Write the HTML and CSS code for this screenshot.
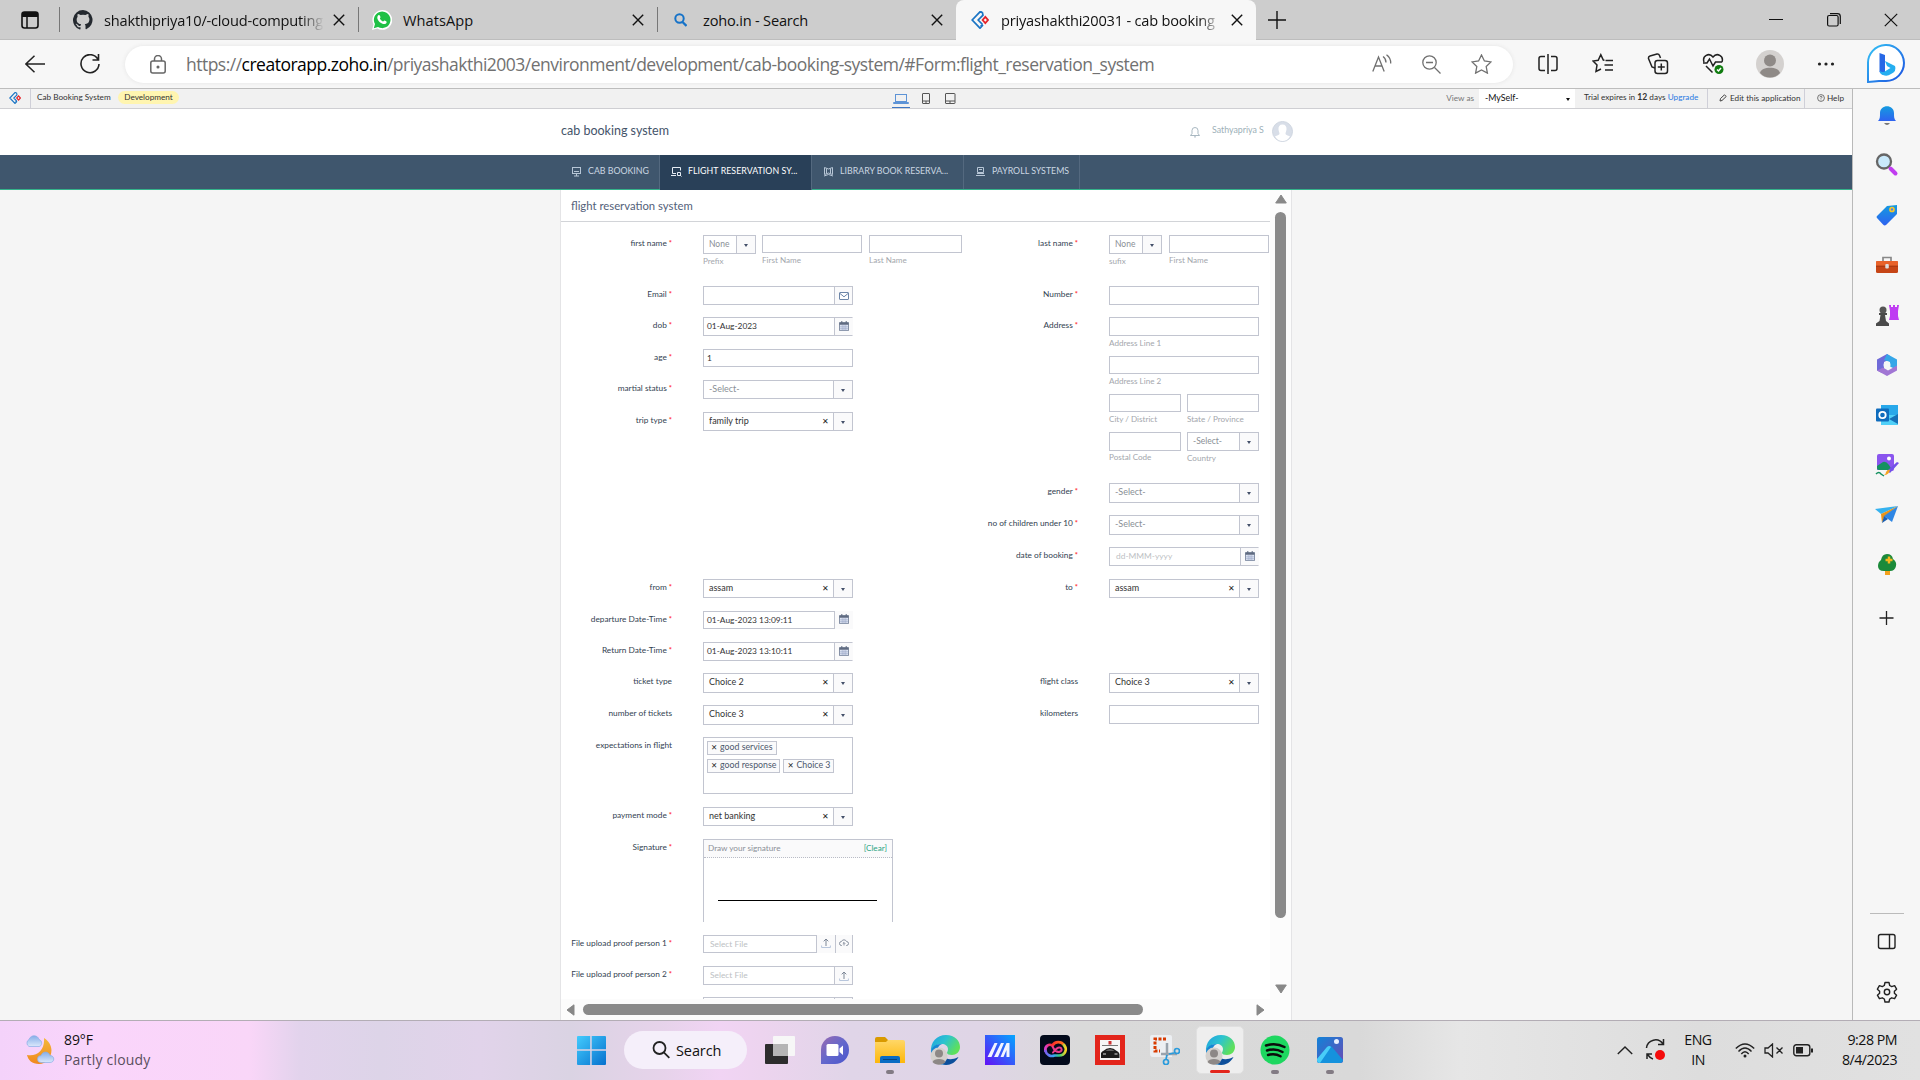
FILE: index.html
```html
<!DOCTYPE html>
<html lang="en">
<head>
<meta charset="utf-8">
<title>priyashakthi20031 - cab booking system</title>
<link rel="stylesheet" href="styles.css">
</head>
<body>
<svg class="defs" width="0" height="0">
  <defs>
    <linearGradient id="gBlue" x1="0" y1="0" x2="0" y2="1"><stop offset="0" stop-color="#149be0"/><stop offset="1" stop-color="#2f62f0"/></linearGradient>
    <linearGradient id="gBing" x1="0" y1="0" x2="1" y2="1"><stop offset="0" stop-color="#35c3f5"/><stop offset="1" stop-color="#1b4fe0"/></linearGradient>
    <linearGradient id="gEdge" x1="0" y1="0" x2="1" y2=".5"><stop offset="0" stop-color="#1f9fe0"/><stop offset=".5" stop-color="#2cc3d0"/><stop offset="1" stop-color="#5fe05a"/></linearGradient>
    <linearGradient id="gWin" x1="0" y1="0" x2="1" y2="1"><stop offset="0" stop-color="#43cbfd"/><stop offset="1" stop-color="#0671ce"/></linearGradient>
    <linearGradient id="gMy" x1="1" y1="0" x2="0" y2="1"><stop offset="0" stop-color="#03a6ff"/><stop offset="1" stop-color="#6410f5"/></linearGradient>
    <linearGradient id="gChat" x1="0" y1="0" x2="1" y2="1"><stop offset="0" stop-color="#9a6ab0"/><stop offset=".5" stop-color="#6468cc"/><stop offset="1" stop-color="#4a55cc"/></linearGradient>
    <linearGradient id="gMoon" x1="0" y1="0" x2="0" y2="1"><stop offset="0" stop-color="#f3b93a"/><stop offset="1" stop-color="#f0881e"/></linearGradient>
    <linearGradient id="gCloud" x1="0" y1="0" x2="0" y2="1"><stop offset="0" stop-color="#86aee8"/><stop offset="1" stop-color="#dbe8fb"/></linearGradient>
    <linearGradient id="gPhoto" x1="0" y1="0" x2="1" y2="1"><stop offset="0" stop-color="#1183d8"/><stop offset="1" stop-color="#6a4bb5"/></linearGradient>
    <linearGradient id="gFolder" x1="0" y1="0" x2="0" y2="1"><stop offset="0" stop-color="#ffd767"/><stop offset="1" stop-color="#fdb70a"/></linearGradient>
    <linearGradient id="gWarm" x1="0" y1="0" x2="1" y2="0"><stop offset="0" stop-color="#d93fd0"/><stop offset=".35" stop-color="#ff2a2a"/><stop offset="1" stop-color="#ff7a1a"/></linearGradient>
    <linearGradient id="gCool" x1="0" y1="0" x2="1" y2="0"><stop offset="0" stop-color="#7a5cf0"/><stop offset=".4" stop-color="#35a8f5"/><stop offset=".7" stop-color="#3ad07a"/><stop offset="1" stop-color="#f8d022"/></linearGradient>
    <symbol id="x" viewBox="0 0 12 12"><path d="M.8.8 11.2 11.2M11.2.8.8 11.2" stroke="#111" stroke-width="1.4" fill="none"/></symbol>
    <symbol id="zoho" viewBox="0 0 18 18"><path d="M11.3 1.2 9 .8 1.2 9 9 17.2 12 14M11.3 1.2 12 4.2 7.2 9 11.5 13.5 M12 14 9.5 15" stroke="#1a74c4" stroke-width="1.7" fill="none"/><path d="M14.3 5.8 17 9l-2.7 3.2L11.6 9z" stroke="#e5242b" stroke-width="1.8" fill="none"/></symbol>
    <symbol id="cal" viewBox="0 0 10 10"><path d="M.5 1.6h9v8h-9z" fill="#dfe5f4" stroke="#6c7890" stroke-width=".8"/><path d="M.5 1.6h9v2.2h-9zM2.3 0h1v2h-1zM6.7 0h1v2h-1z" fill="#5f6a80"/><path d="M3.2 4v5.5M5 4v5.5M6.8 4v5.5M.8 5.8h8.4M.8 7.7h8.4" stroke="#8d9abc" stroke-width=".5"/></symbol>
    <symbol id="up" viewBox="0 0 10 10"><path d="M5 8V1.2M2.7 3.3 5 1l2.3 2.3" fill="none" stroke="#7d8796" stroke-width="1"/><path d="M.6 7.5v2h8.8v-2" fill="none" stroke="#b8c6dc" stroke-width="1"/></symbol>
    <symbol id="edge" viewBox="0 0 30 30"><path d="M1 17C0 7 7 0 16 0c9 0 14 6 14 12 0 5-4 8-8 8-3 0-5-1-5-2 0-1 1-2 1-4 0-3-3-5-6-5C6 9 2 12 1 17z" fill="url(#gEdge)"/><path d="M1 17C1 12 6 8.500 12 9c-3 1-5 4-5 8 0 7 6 12 13 12C9 32 1 26 1 17z" fill="#1687d3"/><path d="M12 14c-2 8 5 11 10 10 3 0 5-1.500 6.500-2C26 27 21 30 16 30c-6-1-9-7-8-12 1-2 2-3 4-4z" fill="#0c4f9b"/><circle cx="9" cy="21" r="8.500" fill="#d3d0cd"/><circle cx="9" cy="18.500" r="4" fill="#8d8886"/><path d="M2.500 27c1-4 12-4 13 0-3 3.500-10 3.500-13 0z" fill="#8d8886"/></symbol>
    <symbol id="person" viewBox="0 0 28 28"><circle cx="14" cy="14" r="14" fill="#d4d1cf"/><circle cx="14" cy="10.500" r="6" fill="#8f8a87"/><path d="M4 23c1-7 19-7 20 0-5 6-15 6-20 0z" fill="#8f8a87"/></symbol>
  </defs>
</svg>

<header class="tabs">
  <svg class="tab-actions" width="18" height="18" viewBox="0 0 18 18"><rect x="1" y="1" width="16" height="16" rx="2.500" fill="none" stroke="#111" stroke-width="1.600"/><path d="M1 3q0-2 2-2h12q2 0 2 2v3H1z" fill="#111"/><path d="M6 5v12" stroke="#111" stroke-width="1.500"/></svg>
  <div class="tab">
    <svg width="20" height="20" viewBox="0 0 16 16"><path fill="#24292f" d="M8 0a8 8 0 0 0-2.530 15.590c.4.070.550-.170.550-.380v-1.500c-2.200.500-2.700-1-2.700-1-.400-.900-.900-1.200-.900-1.200-.700-.500.100-.500.100-.500.800.100 1.200.800 1.200.800.700 1.300 1.900.900 2.300.700.100-.500.300-.900.500-1.100-1.800-.200-3.600-.900-3.600-4 0-.900.300-1.600.800-2.100-.100-.200-.400-1 .100-2.100 0 0 .700-.200 2.200.800a7.500 7.500 0 0 1 4 0c1.500-1 2.200-.800 2.200-.800.400 1.100.200 1.900.100 2.100.500.600.800 1.300.800 2.100 0 3.100-1.900 3.700-3.700 3.900.300.300.600.800.600 1.500v2.200c0 .200.100.500.600.400A8 8 0 0 0 8 0z"/></svg>
    <span class="tab-title fade">shakthipriya10/-cloud-computing</span><svg class="tab-x" width="12" height="12"><use href="#x"/></svg>
  </div>
  <div class="tab">
    <svg width="20" height="20" viewBox="0 0 20 20"><path d="M0 20 1.500 14.500A9.900 9.900 0 1 1 5.300 18.500z" fill="#fff"/><path d="M1.800 18.200 3 14A8.300 8.300 0 1 1 6 17z" fill="#1fc045"/><path d="M6.300 5.300c1-.9 1.500-.2 2.200 1.700.2.600-.8 1.100-.6 1.600.7 1.300 1.700 2.300 3.100 2.900.6.200 1-1.100 1.500-.9 2 .9 2.400 1.100 2.100 1.900-.5 1.500-2.100 1.900-3.600 1.400-2.900-.8-4.700-2.700-5.500-4.900-.4-1.300-.2-2.800.8-3.700z" fill="#fff"/></svg>
    <span class="tab-title wa">WhatsApp</span><svg class="tab-x" width="12" height="12"><use href="#x"/></svg>
  </div>
  <div class="tab tab-search">
    <svg width="13" height="14" viewBox="0 0 13 14"><circle cx="5.500" cy="5.500" r="4.200" fill="none" stroke="#1572c8" stroke-width="2"/><path d="m8.500 9 4 4" stroke="#1572c8" stroke-width="2.300"/></svg>
    <span class="tab-title">zoho.in - Search</span><svg class="tab-x" width="12" height="12"><use href="#x"/></svg>
  </div>
  <div class="tab active">
    <svg width="18" height="18"><use href="#zoho"/></svg>
    <span class="tab-title fade">priyashakthi20031 - cab booking</span><svg class="tab-x" width="12" height="12"><use href="#x"/></svg>
  </div>
  <svg class="newtab" width="18" height="18"><path d="M9 0v18M0 9h18" stroke="#111" stroke-width="1.400"/></svg>
  <div class="win">
    <svg width="14" height="14"><path d="M0 6.500h14" stroke="#111"/></svg>
    <svg width="14" height="14" fill="none" stroke="#111" stroke-width="1.200"><rect x=".6" y="2.500" width="10.500" height="10.500" rx="1.500"/><path d="M3 .7h7.500q2.800 0 2.800 2.800V11"/></svg>
    <svg width="14" height="14"><path d="m.8.800 12.400 12.400M13.200.8.8 13.200" stroke="#111" stroke-width="1.200"/></svg>
  </div>
</header>

<nav class="toolbar">
  <svg class="back" width="20" height="18" fill="none" stroke="#222" stroke-width="1.500"><path d="M20 9H1M9.500.8.9 9l8.600 8.200"/></svg>
  <svg class="reload" width="20" height="20" fill="none" stroke="#222" stroke-width="1.600"><path d="M18 5.500A9 9 0 1 0 19 10M18.500 0v6h-6"/></svg>
  <div class="url">
    <svg width="16" height="19" fill="none" stroke="#666" stroke-width="1.500"><rect x=".8" y="6" width="14.400" height="12" rx="2"/><path d="M4.500 6V4a3.500 3.500 0 0 1 7 0v2"/><circle cx="8" cy="12" r=".8" fill="#666"/></svg>
    <span class="addr">https://<b>creatorapp.zoho.in</b>/priyashakthi2003/environment/development/cab-booking-system/#Form:flight_reservation_system</span>
    <svg width="20" height="20" fill="none" stroke="#707070" stroke-width="1.300"><path d="M.8 17.500 6.500 3l5.700 14.500M2.800 12h7.500M11 2.500q3 2 3 6M14.500.8Q19 4 18.700 9.500"/></svg>
    <svg class="zo" width="19" height="19" fill="none" stroke="#707070" stroke-width="1.300"><circle cx="7.500" cy="7.500" r="6.700"/><path d="m12.500 12.500 6 6M4 7.500h7"/></svg>
    <svg class="st" width="21" height="20" viewBox="0 0 21 20" fill="none" stroke="#707070" stroke-width="1.300"><path d="m10.500 1 2.900 6 6.600.9-4.800 4.600 1.200 6.600-5.900-3.100-5.900 3.100 1.200-6.600L1 7.900 7.600 7z"/></svg>
  </div>
  <div class="tools">
    <svg width="22" height="22" viewBox="0 0 22 22"><path d="M11 1v20M8 3.500H4q-2 0-2 2v10q0 2 2 2h4M14 3.500h4q2 0 2 2v10q0 2-2 2h-4"/></svg>
    <svg width="22" height="22" viewBox="0 0 22 22"><path d="m12.500 7.200-1.200-.2-2.500-5.300L6.200 7.200 1 8l4 4-1 6.500 5-2.500M13.500 7.500H21M12.500 12H21M13 17h8"/></svg>
    <svg width="22" height="22" viewBox="0 0 22 22"><path d="M8 15 5 14 1.500 5.500q-.3-2 1.500-2.500l7-2q1.800-.3 2.500 1.500L13.500 5"/><rect x="8" y="7.500" width="12.500" height="13" rx="2.500"/><path d="M14.300 10.500v7M10.800 14h7"/></svg>
    <svg width="22" height="22" viewBox="0 0 22 22"><path d="M2 9C0 3 7-1 11 4c4-5 11-1 9 5M1 10h4l2.500-4 3.500 7 2.500-4H20M4 13l6.500 6.500"/><circle cx="17" cy="16.500" r="4.500" fill="#107c10" stroke="none"/><path d="m15 16.500 1.500 1.500 2.500-3" stroke="#fff"/></svg>
    <svg class="me" width="28" height="28"><use href="#person"/></svg>
    <svg width="22" height="22" viewBox="0 0 22 22"><g fill="#222" stroke="none"><circle cx="4.500" cy="11" r="1.600"/><circle cx="11" cy="11" r="1.600"/><circle cx="17.500" cy="11" r="1.600"/></g></svg>
  </div>
  <svg class="bing" width="40" height="40" viewBox="0 0 40 40"><path d="M2 38V20A18 18 0 1 1 20 37H13Q8 37.500 2 38z" fill="#fff" stroke="url(#gBing)" stroke-width="2"/><path d="m13.500 9 5.500 2v17l-2 3-3.500-3z" fill="#2768e6"/><path d="m19 17 10 5q2 5-4 8-4 3-8 1-3-1-3.500-4 4 2 6 0l5-3-3.500-2z" fill="#25aef0"/></svg>
</nav>

<div class="below">
<main class="page">
  <div class="devbar">
    <svg class="zl" width="12" height="12"><use href="#zoho"/></svg>
    <span class="appname">Cab Booking System</span><span class="pill">Development</span>
    <div class="devices">
      <span class="dev on"><svg width="16" height="12" fill="none" stroke="#5d93d6"><rect x="2.500" y="1.500" width="11" height="7"/><path d="M.5 9.500v1h15v-1z"/></svg></span>
      <svg width="8" height="11" fill="none" stroke="#555"><rect x=".5" y=".5" width="7" height="10" rx=".5"/><path d="M.5 8h7M4 8v2.500"/></svg>
      <svg class="tabl" width="11" height="11" fill="none" stroke="#555"><rect x=".5" y=".5" width="9.500" height="10" rx=".5"/><path d="M.5 8h9.500M5 8v2.500"/></svg>
    </div>
    <span class="viewas">View as</span>
    <span class="sel">-MySelf- <i class="tri"></i></span>
    <span class="trial">Trial expires in <b>12</b> days <a>Upgrade</a></span>
    <span class="edit"><svg width="8" height="8" fill="none" stroke="#444"><path d="m1 7 .5-2.500L5.500.8l1.700 1.700L3 6.500z"/></svg>Edit this application</span>
    <span class="help"><svg width="8" height="8" fill="none" stroke="#555" stroke-width=".8"><circle cx="4" cy="4" r="3.400"/><path d="M3 3.300Q3 2.300 4 2.300T5 3.300L4 4.300v.5M4 5.600v.6"/></svg>Help</span>
  </div>
  <div class="apphead">
    <span class="apptitle">cab booking system</span>
    <svg class="bell" width="10" height="12" fill="none" stroke="#9fb0ba" stroke-width=".9"><path d="M.5 9.500h9L8 7.500V4.500a3 3 0 0 0-6 0v3zM4 10.500q1 1.500 2 0"/></svg>
    <span class="user">Sathyapriya S</span>
    <svg width="21" height="21" viewBox="0 0 21 21"><circle cx="10.500" cy="10.500" r="10" fill="#d8dee8" stroke="#cfd6e0"/><path d="M10.500 3.500c3 0 4.300 2 4 5-.2 2-1 3-1 4 0 2 4 2 4.500 3q-3 4.500-7.500 4.500T3 15.500c.5-1 4.500-1 4.500-3 0-1-.8-2-1-4-.3-3 1-5 4-5z" fill="#fff"/></svg>
  </div>
  <div class="nav">
    <span class="n n1"><svg width="11" height="11" fill="none" stroke="#b7c6d6"><rect x="1.500" y="1.500" width="8" height="6"/><path d="M3 5.500h5M5.500 8v2M3 10h5"/></svg>CAB BOOKING</span>
    <span class="n n2"><svg width="11" height="11" fill="none" stroke="#e6edf4"><path d="M9.500 4.500v-3h-8v6H5M0 9.500h5M6.500 6.500h3V9.500h-3zM9 9l1.500 1.500"/></svg>FLIGHT RESERVATION SY...</span>
    <span class="n n3"><svg width="11" height="11" fill="none" stroke="#b7c6d6"><path d="M1.500 1.500 5.500 3 9.500 1.500v7L5.500 7 1.500 8.500zM3.500 2.500v5M7.500 2.500v5M1 10l4.500-1.500L10 10"/></svg>LIBRARY BOOK RESERVA...</span>
    <span class="n n4"><svg width="11" height="11" fill="none" stroke="#b7c6d6"><path d="M2.500 1.500h6v5h-6zM1 9.500h9M2 7.500h7M4 3.500h3"/></svg>PAYROLL SYSTEMS</span>
  </div>
  <div class="stage">
    <section class="panel">
      <div class="vrow">
        <div class="view">
          <h1>flight reservation system</h1>
          <div class="form sec1">
            <div class="col">
              <div class="row r51"><label>first name<i>*</i></label>
                <div class="sub"><div class="f w53"><em>None</em><s></s></div><small>Prefix</small></div>
                <div class="sub g6"><div class="f w100 h18"></div><small>First Name</small></div>
                <div class="sub g7"><div class="f w93 h18"></div><small>Last Name</small></div></div>
              <div class="row r31"><label>Email<i>*</i></label><div class="f"><span></span><u><svg width="10" height="8" fill="#fff" stroke="#6d86a8"><rect x=".5" y=".5" width="9" height="7" rx=".5"/><path d="m1 1.500 4 3.300 4-3.300"/></svg></u></div></div>
              <div class="row r32"><label>dob<i>*</i></label><div class="f open"><span class="d">01-Aug-2023</span><u><svg width="10" height="10"><use href="#cal"/></svg></u></div></div>
              <div class="row r31"><label>age<i>*</i></label><div class="f h18"><span class="d">1</span></div></div>
              <div class="row r32"><label>martial status<i>*</i></label><div class="f"><em>-Select-</em><s></s></div></div>
              <div class="row r32"><label>trip type<i>*</i></label><div class="f"><span>family trip</span><q></q><s></s></div></div>
            </div>
            <div class="col">
              <div class="row r51"><label>last name<i>*</i></label>
                <div class="sub"><div class="f w53"><em>None</em><s></s></div><small>sufix</small></div>
                <div class="sub g7"><div class="f w100 h18"></div><small>First Name</small></div></div>
              <div class="row r31"><label>Number<i>*</i></label><div class="f"></div></div>
              <div class="row addr-row"><label>Address<i>*</i></label>
                <div class="address">
                  <div class="sub a39"><div class="f"></div><small>Address Line 1</small></div>
                  <div class="sub a38"><div class="f h18"></div><small>Address Line 2</small></div>
                  <div class="pair a38"><div class="sub"><div class="f w72 h18"></div><small>City / District</small></div><div class="sub"><div class="f w72 h18"></div><small>State / Province</small></div></div>
                  <div class="pair"><div class="sub"><div class="f w72"></div><small class="raise">Postal Code</small></div><div class="sub"><div class="f w72"><em>-Select-</em><s></s></div><small>Country</small></div></div>
                </div></div>
              <div class="row r32"><label>gender<i>*</i></label><div class="f h20"><em>-Select-</em><s></s></div></div>
              <div class="row r32"><label>no of children under 10<i>*</i></label><div class="f h20"><em>-Select-</em><s></s></div></div>
              <div class="row r32"><label>date of booking<i>*</i></label><div class="f open"><em class="ph">dd-MMM-yyyy</em><u><svg width="10" height="10"><use href="#cal"/></svg></u></div></div>
            </div>
          </div>
          <div class="form">
            <div class="col">
              <div class="row r32"><label>from<i>*</i></label><div class="f"><span>assam</span><q></q><s></s></div></div>
              <div class="row r31"><label>departure Date-Time<i>*</i></label><div class="joined"><div class="f h18 w132"><span class="d">01-Aug-2023 13:09:11</span></div><div class="side-icon"><svg width="10" height="10"><use href="#cal"/></svg></div></div></div>
              <div class="row r31"><label>Return Date-Time<i>*</i></label><div class="f open"><span class="d">01-Aug-2023 13:10:11</span><u><svg width="10" height="10"><use href="#cal"/></svg></u></div></div>
              <div class="row r32"><label class="plain">ticket type</label><div class="f h20"><span>Choice 2</span><q></q><s></s></div></div>
              <div class="row r32"><label class="plain">number of tickets</label><div class="f h20"><span>Choice 3</span><q></q><s></s></div></div>
              <div class="row r70"><label class="plain">expectations in flight</label><div class="multi"><span class="chip"><q></q>good services</span><span class="chip"><q></q>good response</span><span class="chip"><q></q>Choice 3</span></div></div>
              <div class="row r32"><label>payment mode<i>*</i></label><div class="f"><span>net banking</span><q></q><s></s></div></div>
              <div class="row r96"><label>Signature<i>*</i></label><div class="sign"><div class="signhead"><span>Draw your signature</span><a>[Clear]</a></div><div class="stroke"></div></div></div>
              <div class="row r31"><label>File upload proof person 1<i>*</i></label><div class="joined"><div class="f h18 w114"><em class="ph">Select File</em></div><div class="side-icon"><svg width="10" height="10"><use href="#up"/></svg></div><div class="side-icon ruled"><svg width="10" height="8" fill="none" stroke="#7d8796" stroke-width=".9"><path d="M3 6.500H2.500a2 2 0 0 1 0-4A2.700 2.700 0 0 1 7.500 2.500a2 2 0 0 1 0 4H7M5 6.500V3.500M3.800 4.700 5 3.500l1.200 1.200"/></svg></div></div></div>
              <div class="row r31"><label>File upload proof person 2<i>*</i></label><div class="f"><em class="ph">Select File</em><u><svg width="10" height="10"><use href="#up"/></svg></u></div></div>
              <div class="row"><label></label><div class="f"><span></span><u></u></div></div>
            </div>
            <div class="col">
              <div class="row r94"><label>to<i>*</i></label><div class="f"><span>assam</span><q></q><s></s></div></div>
              <div class="row r32"><label class="plain">flight class</label><div class="f h20"><span>Choice 3</span><q></q><s></s></div></div>
              <div class="row r32"><label class="plain">kilometers</label><div class="f"></div></div>
            </div>
          </div>
        </div>
        <div class="vbar"><svg width="12" height="10"><path d="M6 1 11.300 9H.7z" fill="#888" stroke="#888" stroke-linejoin="round"/></svg><div class="vthumb"></div><svg class="dn" width="12" height="10"><path d="M6 9 11.300 1H.7z" fill="#888" stroke="#888" stroke-linejoin="round"/></svg></div>
      </div>
      <div class="hbar"><svg width="9" height="12"><path d="M1 6 8 .8v10.400z" fill="#888" stroke="#888" stroke-linejoin="round"/></svg><div class="hthumb"></div><svg class="rt" width="9" height="12"><path d="M8 6 1 .8v10.400z" fill="#888" stroke="#888" stroke-linejoin="round"/></svg></div>
    </section>
  </div>
</main>

<aside class="side">
  <svg viewBox="0 0 24 24"><path d="M3 18c2-2 2-4 2-8 0-9 14-9 14 0 0 4 0 6 2 8z" fill="url(#gBlue)"/><path d="M9 20h6q-3 4-6 0z" fill="#777"/></svg>
  <svg viewBox="0 0 24 24"><circle cx="9" cy="8.500" r="7" fill="#c9e9fb" stroke="#666" stroke-width="2.300"/><path d="m15.500 15.500 5 5" stroke="#c13df0" stroke-width="4" stroke-linecap="round"/></svg>
  <svg viewBox="0 0 24 24"><path d="m2 13 10-10 10-1v9L11 22q-1.500 1-3-.500L2 15q-1-1 0-2z" fill="url(#gBlue)"/><circle cx="17" cy="6.500" r="2" fill="#4a7cf5" stroke="#f2c72a" stroke-width="1.700"/></svg>
  <svg viewBox="0 0 24 24"><path d="M8 8V4.500h8V8" fill="none" stroke="#888" stroke-width="1.700"/><rect x="1" y="8" width="22" height="12" rx="1.500" fill="#c64516"/><path d="M1 13.500h22V9q0-1-1-1H2Q1 8 1 9z" fill="#e8622a"/><path d="M1 13.200h22" stroke="#9b300b"/><rect x="10.300" y="11" width="3.500" height="4.500" rx="1" fill="#ddd"/></svg>
  <svg viewBox="0 0 24 24"><path d="M14 2h2v2h2V2h2v2h2V2h2l-1 6v5l1 4H14l1-4V8z" fill="#bf3df2"/><circle cx="8" cy="7" r="3.500" fill="#555"/><path d="M4 10h8v2h-2l1 6 3 2.500V23H1v-2.500L4.500 18l1-6H4z" fill="#4a4a4a"/></svg>
  <svg viewBox="0 0 24 24"><path d="M12 1 2 6.500v11L7 20l2-1V9l6-2.500V3z" fill="#6f6ad8"/><path d="m12 1 10 5.500V17l-7-3.500V9L9 7z" fill="#35a6e8"/><path d="m2 17.500 10 5.500 10-5.500v-5l-9 5-5-3z" fill="#a176d4"/><circle cx="12" cy="12" r="3.500" fill="#f6f6f6"/></svg>
  <svg viewBox="0 0 24 24"><rect x="6" y="2" width="17" height="11" fill="#28a8ea"/><path d="M6 12h17v10H6z" fill="#50d0f8"/><path d="m14 16 9-5v10z" fill="#1470b8"/><rect x="1" y="5.500" width="13" height="13" rx="1" fill="#0f6cbd"/><circle cx="7.500" cy="12" r="3.200" fill="none" stroke="#fff" stroke-width="1.800"/></svg>
  <svg viewBox="0 0 24 24"><rect x="2" y="1" width="17" height="17" rx="2" fill="#8a55ee"/><circle cx="14" cy="5.500" r="2" fill="#fff"/><path d="m2 13 6-4q3-1 6 3l3 5H4q-2 0-2-2z" fill="#159160"/><path d="M1 17h14v6H1z" fill="#f6f6f6"/><path d="m12 18 10-9 2 1-9 10z" fill="#7250e8"/><path d="M15 17q-1 5-6 5 2-1 2-3 2-3 4-2z" fill="#f5a623"/><path d="M1 21q3-3 5 0l3 2" fill="none" stroke="#159160" stroke-width="1.500"/></svg>
  <svg viewBox="0 0 24 24"><path d="m0 6 23-3-17 8z" fill="#35b2ef"/><path d="m23 3-17 8 1 9 2-6z" fill="#e8941a"/><path d="M23 3 9 13l8 6z" fill="#2e86e4"/><path d="m7 20 2-7 4 3z" fill="#1a5fb4"/></svg>
  <svg viewBox="0 0 24 24"><path d="M10 17h5v5h-5z" fill="#f3a11c"/><path d="M12 1q5 0 6 5 4 3 3 7-1 5-6 5H9q-6 0-6-5 0-4 3-6 1-6 6-6z" fill="#1b8a3a"/><path d="M14 3.500v7M10.500 7h7" stroke="#f6b81f" stroke-width="2.500"/></svg>
  <svg class="plus" viewBox="0 0 24 24"><path d="M11.500 5v14M4.500 12h14" stroke="#222" stroke-width="1.300"/></svg>
  <div class="sep"></div>
  <svg viewBox="0 0 24 24" fill="none" stroke="#222" stroke-width="1.400"><rect x="3.500" y="4.500" width="16.500" height="14" rx="2"/><path d="M14.500 4.500v14"/></svg>
  <svg class="gear" viewBox="0 0 24 24" fill="none" stroke="#222" stroke-width="1.400"><circle cx="12" cy="12" r="2.700"/><path d="M10 2.500h4l.7 3 2 1.100 2.900-.9 2 3.500-2.200 2v2l2.200 2-2 3.500-2.900-.9-2 1.200-.7 3h-4l-.7-3-2-1.200-2.900.9-2-3.500 2.200-2v-2l-2.200-2 2-3.500 2.900.9 2-1.100z" stroke-linejoin="round"/></svg>
</aside>
</div>

<footer class="task">
  <svg class="wx" width="32" height="30" viewBox="0 0 32 30"><path d="M20 3c14 9 6 26-5 26C8 29 4 25 3 20c10 2 18-5 17-17z" fill="url(#gMoon)"/><path d="M5 11.500a4 4 0 0 1 0-7C7-1 14 0 15 4.500c4 1 3 7 0 7z" fill="url(#gCloud)" stroke="#8aaee6" stroke-width=".7"/><path d="M17 27.500a3.500 3.500 0 0 1 0-7c2-5 8-4 9 0 5 0 5 7 0 7z" fill="url(#gCloud)" stroke="#8aaee6" stroke-width=".7"/></svg>
  <div class="weather"><span>89°F</span><span class="dim">Partly cloudy</span></div>
  <div class="apps">
    <svg width="30" height="30" viewBox="0 0 30 30"><path d="M1 2q0-1 1-1h12.200v13.200H1zM15.700 1H29q1 0 1 1v12.200H15.700zM1 15.700h13.200V30H2q-1 0-1-1zM15.700 15.700H30V29q0 1-1 1H15.700z" fill="url(#gWin)"/></svg>
    <div class="search"><svg width="18" height="18" fill="none" stroke="#222" stroke-width="1.800"><circle cx="7.500" cy="7" r="6"/><path d="m11.800 11.300 5.500 5.500"/></svg>Search</div>
    <svg class="a" width="30" height="30"><rect y="9" width="23" height="20" rx="1" fill="#2d2d2d"/><rect x="8" y="1" width="22" height="20" rx="1" fill="#f7f7f7"/><path d="M8 9h15v12H8z" fill="#b5b5b5"/></svg>
    <svg class="a" width="30" height="30" viewBox="0 0 30 30"><path d="M1 29V15A14 14 0 1 1 15 29z" fill="url(#gChat)"/><rect x="6.500" y="9" width="12" height="12" rx="1.500" fill="#fff"/><path d="m19.500 13.500 3.500-3v9.500l-3.500-3z" fill="#fff"/></svg>
    <div class="a run"><svg width="30" height="30" viewBox="0 0 30 30"><path d="M0 4q0-2 2-2h8l3 3v5H0z" fill="#d99a00"/><path d="M0 7h11l2-2h15q2 0 2 2v21H0z" fill="url(#gFolder)"/><path d="M5 28v-5q0-2 2-2h16q2 0 2 2v5z" fill="#0a6cc4"/><path d="M8 24.500h14" stroke="#07457f"/></svg></div>
    <svg class="a" width="30" height="30"><use href="#edge"/></svg>
    <svg class="a" width="30" height="30" viewBox="0 0 30 30"><path d="M0 0h30v30H0z" fill="url(#gMy)"/><path d="m2.500 22 7-14h3l-6 14zM9 22l7-14h3l-6 14zM15.500 22l6-14h3v14h-3V15l-3 7z" fill="#f2f4ff"/></svg>
    <svg class="a" width="30" height="30" viewBox="0 0 30 30"><rect width="30" height="30" rx="4" fill="#030a1c"/><g fill="none" stroke-width="2.700" stroke-linecap="round"><path d="M5.500 16C4.500 11 9 8.500 12.500 10.500 15 6 21 6 24 10" stroke="url(#gWarm)"/><path d="M5.500 16c1 4 5 6 9 4.500h4.500c6.500 0 8.500-6.500 5-10.500" stroke="url(#gCool)"/><path d="M13 17.500q5-6.500 8-4.500 2 3-2 4-4 0-6.500-5.500" stroke="#e83a8a" stroke-width="2"/></g></svg>
    <svg class="a" width="30" height="30"><path d="M0 0h30v30H0z" fill="#e3251b"/><path d="M5 5h20v20H5z" fill="#f6f6f6"/><path d="M13.500 6h3v3.500h-3z" fill="#c33"/><path d="M7 10.500h16" stroke="#777"/><path d="M6 18q1-2 3-2.500 2-2.500 6-2.500t6 2.500q3 1 3.500 3.500v4H6z" fill="#1c1c1c"/><path d="M10.500 15.500q4.500-2 9 0z" fill="#aaa"/><path d="M8 19h3M19.500 19h3" stroke="#ddd"/></svg>
    <svg class="a" width="30" height="30" viewBox="0 0 30 30"><path d="M0 2q0-2 2-2h18q2 0 2 2v20H3q-3 0-3-3z" fill="#eceff3"/><path d="M16 4H5v12h5" fill="none" stroke="#d83b01" stroke-width="3" stroke-dasharray="3 1.500"/><path d="M17 8v13M11 19h16" stroke="#9aa3ad" stroke-width="2.500"/><circle cx="27" cy="16" r="2.500" fill="none" stroke="#2a9bdc" stroke-width="1.700"/><circle cx="16" cy="27" r="2.500" fill="none" stroke="#2a9bdc" stroke-width="1.700"/><path d="m16 24 1-4M24 18l-5 1" stroke="#2a9bdc" stroke-width="1.700"/></svg>
    <div class="current"><svg width="30" height="30"><use href="#edge"/></svg></div>
    <div class="run"><svg width="30" height="30" viewBox="0 0 30 30"><circle cx="15" cy="15" r="14.500" fill="#1ed760"/><path d="M6 10.500q10-3 18.500 1.500M7 15.500q8.500-2.500 15.500 1.500M8 20q7-2 12.500 1.300" fill="none" stroke="#0b0b0b" stroke-width="2.500" stroke-linecap="round"/></svg></div>
    <div class="a run"><svg width="30" height="30" viewBox="0 0 30 30"><rect x="2" y="2" width="26" height="26" rx="2.500" fill="url(#gPhoto)"/><circle cx="21.500" cy="6.500" r="2.500" fill="#e8f0ff"/><path d="m2 24 10-12q2.500-2 5 0l11 13q0 3-3 3H5q-3 0-3-3z" fill="#1592dd"/><path d="m2 24 10-12q2.500-2 4 0L5 28q-3 0-3-3z" fill="#49cdf8"/></svg></div>
  </div>
  <div class="tray">
    <svg width="16" height="9"><path d="m.8 8 7.200-7 7.200 7" fill="none" stroke="#222" stroke-width="1.400"/></svg>
    <svg class="sync" width="22" height="22" fill="none" stroke="#222" stroke-width="1.500"><path d="M1.500 9A9 9 0 0 1 18 5M18.500 0v5.500H13M8 20Q5 19 2.500 15.500M2 20v-5h5"/><circle cx="15" cy="16" r="5" fill="#f40b0b" stroke="none"/></svg>
    <div class="lang"><span>ENG</span><span>IN</span></div>
    <svg class="wifi" width="20" height="15" fill="none" stroke="#222" stroke-width="1.400"><path d="M.8 5.500Q10-3.500 19.200 5.500M3.500 8.500Q10 1.500 16.500 8.500M6.300 11Q10 6.500 13.700 11"/><circle cx="10" cy="13" r="1.500" fill="#222" stroke="none"/></svg>
    <svg class="mute" width="20" height="15" fill="none" stroke="#222" stroke-width="1.300"><path d="M1 5h3l4.500-4v13L4 10H1zM12.500 4.500l6 6M18.500 4.500l-6 6"/></svg>
    <svg class="batt" width="21" height="13" fill="none" stroke="#222" stroke-width="1.400"><rect x=".8" y=".8" width="16" height="11" rx="2.500"/><path d="M19 4.500v4" stroke-width="2"/><path d="M3 3h7v6.500H3z" fill="#222" stroke="none"/></svg>
    <div class="clock"><span>9:28 PM</span><span>8/4/2023</span></div>
  </div>
</footer>
</body>
</html>
```
FILE: styles.css
```css
* { box-sizing: border-box; }
body { margin: 0; width: 1920px; height: 1080px; overflow: hidden; display: flex; flex-direction: column; font-family: "Open Sans", "Noto Sans", sans-serif; color: #111; }
svg { display: block; flex: none; }
.defs { position: absolute; }

/* browser tabs */
.tabs { height: 40px; flex: none; background: #cdcdcd; display: flex; align-items: center; border-bottom: 1px solid #bdbdbd; }
.tab-actions { margin: 0 20px 0 21px; }
.tab { display: flex; align-items: center; width: 299px; height: 25px; padding: 0 13px 0 13px; border-left: 1px solid #777; }
.tab-search { padding-left: 16px; }
.tab-search .tab-title { padding-left: 16px; }
.tab.active { width: 300px; height: 40px; margin-bottom: -1px; background: #f7f7f7; border: 0; border-radius: 8px 8px 0 0; padding-left: 15px; }
.tab-title { flex: 1; padding-left: 11px; font-size: 14.6px; letter-spacing: -.2px; white-space: nowrap; overflow: hidden; }
.tab-title.wa { letter-spacing: .05px; }
.tab-title.fade { margin-right: 9px; -webkit-mask-image: linear-gradient(90deg, #000 90%, transparent); mask-image: linear-gradient(90deg, #000 90%, transparent); }
.active .tab-title { padding-left: 12px; }
.newtab { margin-left: 12px; }
.win { margin-left: auto; margin-right: 22px; display: flex; gap: 43.5px; }

/* address bar */
.toolbar { height: 48px; flex: none; background: #f7f7f7; display: flex; align-items: center; }
.back { margin-left: 25px; }
.reload { margin-left: 35px; }
.url { margin-left: 25px; width: 1388px; height: 37px; border-radius: 19px; background: #fff; box-shadow: 0 0 4px #e4e4e4; display: flex; align-items: center; padding-left: 25px; }
.addr { margin-left: 20px; width: 1186px; font-size: 17.5px; letter-spacing: -.51px; color: #717171; white-space: nowrap; padding-bottom: 1px; }
.addr b { font-weight: 400; color: #000; }
.zo { margin-left: 30px; }
.st { margin-left: 30px; }
.tools { display: flex; align-items: center; margin-left: 24px; gap: 33px; fill: none; stroke: #222; stroke-width: 1.5; }
.tools .me { margin: 0 -2px 0 -1px; stroke: none; }
.bing { margin-left: 29px; }

.below { flex: 1; min-height: 0; display: flex; background: #f6f6f6; border-top: 1px solid #bdbdbd; }
.page { width: 1853px; flex: none; border-right: 1px solid #b9b9b9; font-family: Lato, sans-serif; display: flex; flex-direction: column; background: #f5f5f5; }

/* developer strip */
.devbar { height: 20px; flex: none; background: #f1f1f1; border-bottom: 1px solid #cfcfd3; display: flex; font-size: 8.2px; line-height: 16px; color: #333; white-space: nowrap; }
.zl { margin: 3px 9px 0; }
.appname { width: 81px; border-left: 1px solid #cfcfd8; padding-left: 6px; }
.pill { height: 13px; width: 61px; margin: 2px 0 0 7px; border-radius: 7px; background: #fff5b0; line-height: 12px; text-align: center; }
.devices { display: flex; align-items: flex-start; margin-left: 713px; padding-top: 4px; }
.dev { width: 18px; height: 15px; border-bottom: 1px solid #3d76c4; padding-left: 1px; margin-right: 12px; }
.tabl { margin-left: 15px; }
.viewas { margin-left: auto; color: #777; line-height: 18px; }
.sel { width: 96px; margin-left: 5px; background: #fff; padding: 0 5px 2px 6px; display: flex; justify-content: space-between; align-items: center; color: #111; font-size: 8.8px; }
.tri { border: 2.5px solid transparent; border-top: 3.5px solid #111; border-bottom: 0; margin-top: 3px; }
.trial { width: 132px; padding-left: 9px; }
.trial b { font-size: 8.6px; }
.trial a { color: #2a7ae2; }
.edit { width: 97px; border-left: 1px solid #cfcfd8; padding: 0 0 2px 11px; display: flex; align-items: center; gap: 3px; }
.help { width: 48px; border-left: 1px solid #cfcfd8; padding: 0 0 2px 12px; display: flex; align-items: center; gap: 2px; }

.apphead { height: 46px; flex: none; background: #fff; display: flex; align-items: center; padding-left: 561px; color: #44546a; }
.apptitle { font-size: 12.5px; width: 629px; padding-bottom: 3px; }
.user { font-size: 8.8px; margin: -6px 7px 0 12px; width: 53px; white-space: nowrap; color: #9db0b8; }
.apphead svg:last-child { margin-top: -1px; }

.nav { height: 35px; flex: none; background: #3f566d; border-bottom: 1px solid #34b28a; display: flex; padding-left: 560px; color: #cbd6e2; font-size: 8.8px; }
.n { display: flex; align-items: center; gap: 6px; height: 34px; padding: 0 0 4px 11px; border-right: 1px solid #54697f; white-space: nowrap; }
.n svg { margin-top: 2px; }
.n1 { width: 100px; }
.n2 { width: 152px; height: 35px; background: #294058; color: #fff; }
.n2 { letter-spacing: .05px; }
.n3 { width: 152px; }
.n4 { width: 116px; }

/* form panel */
.stage { flex: 1; min-height: 0; padding-left: 560px; display: flex; }
.panel { width: 732px; border: solid #e4e4e6; border-width: 0 1px; background: #fcfcfc; display: flex; flex-direction: column; }
.vrow { flex: 1; min-height: 0; display: flex; }
.view { width: 709px; background: #fff; overflow: hidden; }
h1 { margin: 0; height: 32px; padding-left: 10px; border-bottom: 1px solid #d2d4d8; font-size: 11.3px; font-weight: 400; line-height: 31px; color: #53617a; }
.form { display: flex; }
.sec1 { height: 357px; padding-top: 13px; }
.col { width: 406px; flex: none; }
.row { display: flex; height: 31px; color: #3c4a5f; }
.r32 { height: 32px; } .r51 { height: 51px; } .r70 { height: 70px; } .r94 { height: 94px; } .r96 { height: 96px; } .addr-row { height: 166px; }
label { width: 111px; flex: none; margin-right: 31px; text-align: right; font-size: 8.3px; line-height: 17px; white-space: nowrap; color: #333f52; }
label i { color: #f33; font-style: normal; font-weight: bold; margin-left: 2px; font-size: 7.5px; line-height: 10px; }
.f { width: 150px; height: 19px; flex: none; border: 1px solid #c2c5d0; background: #fff; display: flex; align-items: stretch; font-size: 9px; color: #333; line-height: 17px; white-space: nowrap; }
.f > span, .f > em { flex: 1; padding-left: 5px; font-style: normal; line-height: 16px; }
.f > .d { padding-left: 3px; font-size: 8.4px; line-height: 17px; }
.h18 > .d { line-height: 16px !important; }
.f em { color: #8a8f96; }
.f .ph { color: #bdbfc4; padding-left: 6px; font-size: 8.4px; line-height: 17px; }
.h18 { height: 18px; } .h20 { height: 20px; }
.w53 { width: 53px; } .w100 { width: 100px; } .w93 { width: 93px; } .w72 { width: 72px; } .w132 { width: 132px; } .w114 { width: 114px; }
.f s { width: 19px; border-left: 1px solid #c2c5d0; background: #fafafb; display: flex; align-items: center; justify-content: center; padding-top: 1px; }
.f s::before { content: ""; border: 2px solid transparent; border-top: 3px solid #44506a; border-bottom: 0; }
.f u { width: 18px; border-left: 1px solid #c2c5d0; background: #fafafb; display: flex; align-items: center; justify-content: center; }
.open { border-right-color: #fafafb; }
.open u, .side-icon { padding-bottom: 2px; }
.joined { display: flex; }
.side-icon { width: 18px; height: 18px; background: #fafafb; display: flex; align-items: center; justify-content: center; }
.ruled { border: solid #c2c5d0; border-width: 0 1px; }
.f q, .chip q { quotes: none; width: 7px; align-self: center; display: flex; margin-right: 4px; }
q::before { content: "✕" !important; font: bold 8px/10px "DejaVu Sans", sans-serif; color: #222; }
.w53 em { font-size: 8.5px; }
.w72 em { font-size: 8.5px; }
.sub { display: flex; flex-direction: column; flex: none; }
.sub small { font-size: 8.1px; line-height: 10px; margin-top: 2px; color: #a4a7ad; white-space: nowrap; }
.raise { position: relative; top: -1px; }
.g6 { margin-left: 6px; } .g7 { margin-left: 7px; }
.a39 { height: 39px; } .a38 { height: 38px; }
.pair { display: flex; gap: 6px; }
.multi { width: 150px; height: 57px; border: 1px solid #c2c5d0; padding: 3px; display: flex; flex-wrap: wrap; gap: 4px 3px; align-content: flex-start; }
.chip { height: 14px; border: 1px solid #c2c5d0; background: #fafafb; font-size: 8.8px; line-height: 10px; padding: 0 3px; display: flex; color: #4c586c; }
.chip:first-child { margin-right: 60px; }
.chip q { margin-right: 2px; }
.chip q::before { font-weight: 400; font-size: 7.5px; }
.sign { width: 190px; height: 83px; border: 1px solid #c2c5d0; border-bottom: 0; }
.signhead { height: 18px; border-bottom: 1px dotted #b9bcc6; background: #fafafb; display: flex; justify-content: space-between; padding: 0 5px 0 4px; font-size: 8.2px; line-height: 17px; color: #8b9098; }
.signhead a { color: #2aa482; }
.stroke { margin: 42px 0 0 14px; width: 159px; height: 1px; background: #000; }

.vbar { width: 21px; background: #fcfcfc; display: flex; flex-direction: column; align-items: center; padding-top: 4px; }
.vthumb { width: 11px; height: 706px; margin-top: 8px; border-radius: 6px; background: #8a8a8a; }
.dn { margin-top: 66px; }
.hbar { height: 21px; flex: none; display: flex; align-items: center; padding-left: 5px; }
.hthumb { width: 560px; height: 11px; border-radius: 6px; background: #8a8a8a; margin-left: 8px; }
.rt { margin-left: 113px; }

/* sidebar */
.side { flex: 1; display: flex; flex-direction: column; align-items: center; padding-top: 14px; gap: 26px; }
.side svg { width: 24px; height: 24px; }
.side .plus { margin-top: 3px; }
.sep { width: 34px; height: 1px; background: #bbb; margin: 257px 0 -10px; }

/* taskbar */
.task { height: 60px; flex: none; border-top: 1px solid #b3adb5; display: flex; align-items: center; position: relative; background: linear-gradient(90deg, #f4d2fa 0, #fad5fb 100px, #f9d6f8 250px, #e2d3ec 300px, #ddd4e8 380px, #e1d3ea 480px, #dad3e3 570px, #e6d3ea 660px, #f1d4f4 720px, #edd4ef 760px, #e0d5e8 850px, #dfd5e6 980px, #dadada 1080px, #d9d9d9 1360px, #e6e6e6 1460px, #dddddd 1700px, #e1e1e1 1920px); padding-bottom: 1px; }
.wx { margin-left: 24px; }
.weather { margin-left: 8px; width: 512px; font-size: 14px; line-height: 20px; letter-spacing: -.1px; display: flex; flex-direction: column; }
.dim { color: #5a4f5e; letter-spacing: .2px; }
.apps { display: flex; align-items: center; height: 60px; }
.search { width: 123px; height: 38px; margin: 0 18px 0 18px; border-radius: 19px; background: #f5effa; display: flex; align-items: center; gap: 6px; padding-left: 28px; font-size: 14.5px; letter-spacing: -.1px; }
.a { margin-left: 25px; }
.search + .a { margin-left: 0; }
.run { height: 60px; display: flex; flex-direction: column; align-items: center; padding-top: 15px; }
.run::after { content: ""; width: 8px; height: 4px; border-radius: 2px; background: #827b84; margin-top: 5px; }
.current { width: 48px; height: 48px; margin: 0 16px 0 16px; background: #eee; border: 1px solid #e0e0e0; border-radius: 5px; display: flex; flex-direction: column; align-items: center; padding-top: 8px; }
.current::after { content: ""; width: 20px; height: 4px; border-radius: 2px; background: #e3251b; margin-top: 5px; }
.tray { margin-left: auto; padding-right: 23px; display: flex; align-items: center; font-size: 14.2px; line-height: 20px; letter-spacing: -.5px; }
.sync { margin-left: 12px; }
.lang, .clock { display: flex; flex-direction: column; align-items: center; }
.lang { width: 34px; margin: 0 20px 0 14px; }
.mute { margin-left: 9px; }
.batt { margin-left: 9px; }
.clock { width: 73px; margin-left: 10px; align-items: flex-end; }
```
